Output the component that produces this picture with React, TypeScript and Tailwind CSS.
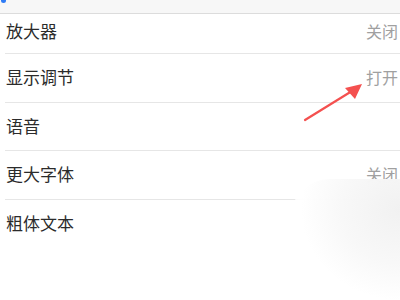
const rows = [
  { label: "显示调节", value: "打开" },
  { label: "语音", value: "" },
  { label: "更大字体", value: "关闭" },
];

export default function App() {
  return (
    <div
      className="relative h-[300px] w-[400px] overflow-hidden bg-white"
      style={{ fontFamily: '"Noto Sans CJK SC", "Noto Sans", sans-serif' }}
    >
      <div className="relative h-[14px] border-b border-[#dcdcdc] bg-[#f7f7f7]">
        <div className="absolute -top-[4px] left-[1px] h-[7px] w-[5px] rounded-full bg-[#2f7cf6]" />
      </div>
      <div className="ml-[5px] flex h-[40px] items-center justify-between border-b border-[#e6e6e6] pb-[6px] pl-[1px] pr-[2px]">
        <span className="text-[17px] text-[#2b2b2b]">放大器</span>
        <span className="text-[16px] text-[#a0a0a0]">关闭</span>
      </div>
      {rows.map((r) => (
        <div
          key={r.label}
          className="ml-[5px] flex h-[48.5px] items-center justify-between border-b border-[#e6e6e6] pb-[2px] pl-[1px] pr-[2px]"
        >
          <span className="text-[17px] text-[#2b2b2b]">{r.label}</span>
          <span className="text-[16px] text-[#a0a0a0]">{r.value}</span>
        </div>
      ))}
      <div className="ml-[5px] flex h-[48px] items-center pb-[2px] pl-[1px]">
        <span className="text-[17px] text-[#2b2b2b]">粗体文本</span>
      </div>

      {/* faded patch in the lower right */}
      <div className="absolute left-[290px] top-[179px] h-[121px] w-[110px] rounded-tl-[40px] bg-[radial-gradient(ellipse_120%_100%_at_100%_25%,#f1f1f1_0%,rgba(248,248,248,0.98)_45%,rgba(255,255,255,0.98)_75%,rgba(255,255,255,0.2)_100%)]" />

      {/* red arrow */}
      <svg className="absolute left-0 top-0" width="400" height="300" viewBox="0 0 400 300">
        <line x1="305" y1="120" x2="352" y2="91" stroke="#f4504f" strokeWidth="2.2" strokeLinecap="round" />
        <polygon points="362,84 345,88 355,99" fill="#f4504f" />
      </svg>
    </div>
  );
}
